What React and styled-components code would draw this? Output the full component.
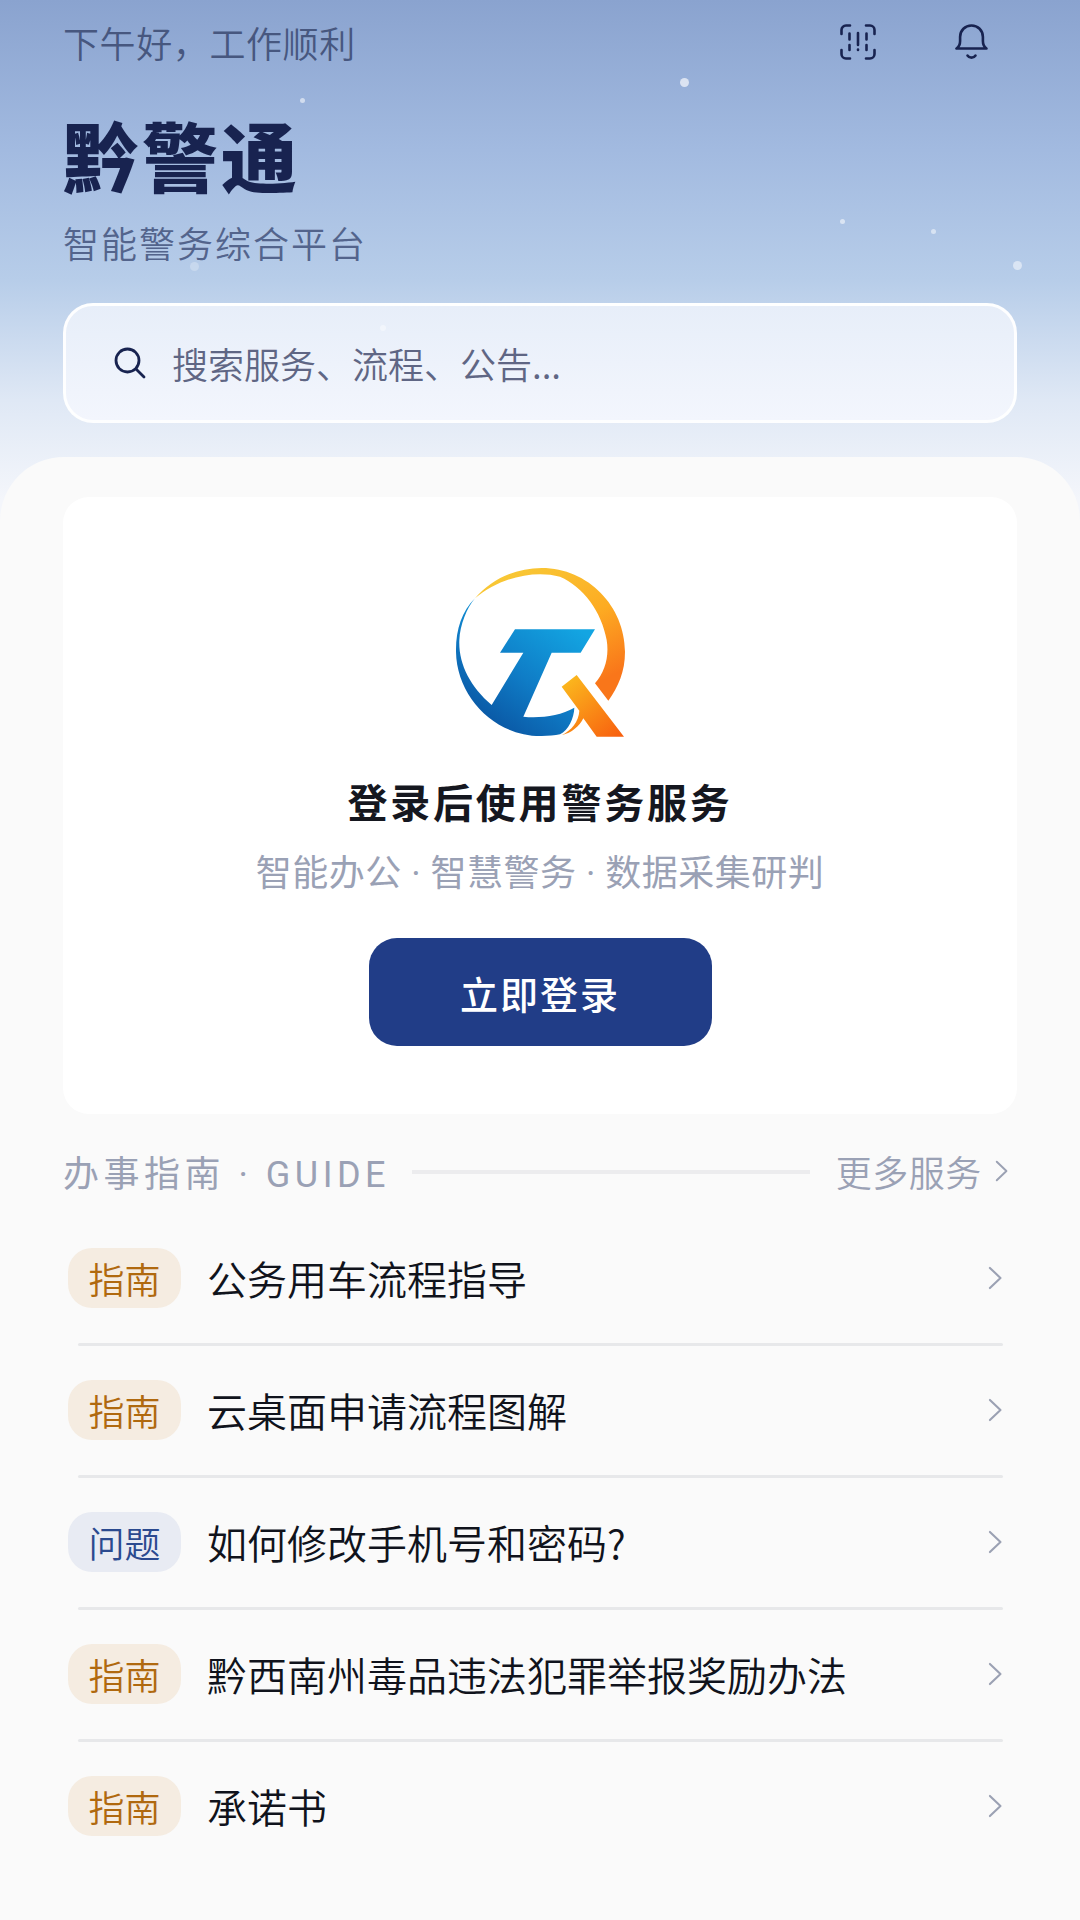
import React from "react";
import styled, { createGlobalStyle } from "styled-components";

const Global = createGlobalStyle`
  html, body { margin: 0; padding: 0; background: #fafafa; }
  * { box-sizing: border-box; }
  body { font-family: "Noto Sans CJK SC", "Noto Sans", sans-serif; }
`;

const Page = styled.div`
  position: relative;
  width: 1080px;
  height: 1920px;
  overflow: hidden;
  display: flex;
  flex-direction: column;
  background: linear-gradient(180deg, #8aa3cf 0px, #a2bae0 150px, #b7cde9 280px, #dfe8f5 400px, #f4f6fb 500px);
`;

const Hero = styled.header`
  position: relative;
  height: 457px;
  flex: none;
  padding: 0 63px;
  display: flex;
  flex-direction: column;
`;

const Dot = styled.span`
  position: absolute;
  border-radius: 50%;
  background: rgba(255, 255, 255, ${(p) => p.$a});
`;

const TopBar = styled.div`
  display: flex;
  align-items: center;
  justify-content: space-between;
  height: 50px;
  margin-top: 17px;
`;

const Greeting = styled.div`
  font-size: 36px;
  line-height: 50px;
  color: #47577f;
  font-weight: 350;
  letter-spacing: 0.6px;
`;

const TopIcons = styled.div`
  display: flex;
  align-items: center;
  gap: 79px;
  margin-right: 29px;
`;

const Title = styled.h1`
  margin: 39px 0 0;
  font-size: 76px;
  line-height: 96px;
  font-weight: 900;
  letter-spacing: 3px;
  color: #182350;
`;

const Subtitle = styled.div`
  margin-top: 15px;
  font-size: 36px;
  line-height: 50px;
  letter-spacing: 2px;
  font-weight: 350;
  color: #53648c;
`;

const Search = styled.div`
  margin-top: 36px;
  height: 120px;
  display: flex;
  align-items: center;
  padding-left: 48px;
  gap: 26px;
  border: 3px solid rgba(255, 255, 255, 0.92);
  border-radius: 30px;
  background: linear-gradient(180deg, #e7eef9, #f3f6fd);
`;

const SearchText = styled.span`
  font-size: 36px;
  font-weight: 350;
  color: #5f6684;
`;

const Sheet = styled.main`
  flex: 1;
  background: #fafafa;
  border-radius: 64px 64px 0 0;
  padding: 40px 63px 0;
`;

const Card = styled.section`
  height: 617px;
  background: #fff;
  border-radius: 26px;
  display: flex;
  flex-direction: column;
  align-items: center;
  padding-top: 43px;
`;

const CardTitle = styled.div`
  margin-top: 13px;
  font-size: 40px;
  line-height: 56px;
  font-weight: 700;
  letter-spacing: 2.8px;
  color: #15171f;
`;

const CardSub = styled.div`
  margin-top: 20px;
  font-family: "Roboto", "Noto Sans CJK SC", sans-serif;
  font-size: 36px;
  font-weight: 400;
  letter-spacing: 0.5px;
  line-height: 50px;
  color: #9aa1b5;
`;

const LoginButton = styled.div`
  margin-top: 39px;
  width: 343px;
  height: 108px;
  border-radius: 28px;
  background: #213d87;
  color: #fff;
  font-size: 38px;
  font-weight: 500;
  letter-spacing: 2px;
  display: flex;
  align-items: center;
  justify-content: center;
`;

const SectionHead = styled.div`
  margin-top: 32px;
  height: 50px;
  display: flex;
  align-items: center;
  padding-right: 9px;
`;

const SectionLabel = styled.div`
  font-family: "Roboto", "Noto Sans CJK SC", sans-serif;
  font-size: 36px;
  font-weight: 400;
  letter-spacing: 4.5px;
  color: #9aa1b5;
  white-space: nowrap;
`;

const SectionRule = styled.div`
  flex: 1;
  height: 4px;
  background: #ececee;
  margin: 2px 26px 0 22px;
`;

const More = styled.div`
  font-size: 36px;
  font-weight: 350;
  letter-spacing: 0.5px;
  color: #9aa1b5;
  display: flex;
  align-items: center;
  gap: 13px;
  white-space: nowrap;
`;

const List = styled.div`
  margin-top: 16px;
`;

const Row = styled.div`
  height: 132px;
  display: flex;
  align-items: center;
  padding: 0 15px 0 5px;
  position: relative;
  &:not(:last-child)::after {
    content: "";
    position: absolute;
    left: 15px;
    right: 14px;
    bottom: -2px;
    height: 3px;
    border-radius: 2px;
    background: #e7e8ea;
  }
`;

const Tag = styled.span`
  width: 113px;
  height: 60px;
  border-radius: 24px;
  flex: none;
  display: flex;
  align-items: center;
  justify-content: center;
  font-size: 36px;
  font-weight: 350;
  background: ${(p) => (p.$kind === "问题" ? "#e8ebf3" : "#f5ece1")};
  color: ${(p) => (p.$kind === "问题" ? "#2b4a8f" : "#b0690f")};
`;

const RowTitle = styled.span`
  margin-left: 26px;
  flex: 1;
  font-size: 40px;
  font-weight: 350;
  color: #10131c;
`;

const Chevron = ({ size = 24 }) => (
  <svg width={size * 0.6} height={size} viewBox="0 0 15 25" fill="none">
    <path d="M2 2 L13 12.5 L2 23" stroke="#9ba1b3" strokeWidth="2.2" strokeLinecap="round" strokeLinejoin="round" />
  </svg>
);

const ScanIcon = () => (
  <svg width="36" height="36" viewBox="0 0 36 36" fill="none" stroke="#182350" strokeWidth="2.6" strokeLinecap="round">
    <path d="M10 1.5H6a4.5 4.5 0 0 0-4.5 4.5v4" />
    <path d="M26 1.5h4a4.5 4.5 0 0 1 4.5 4.5v4" />
    <path d="M10 34.5H6a4.5 4.5 0 0 1-4.5-4.5v-4" />
    <path d="M26 34.5h4a4.5 4.5 0 0 0 4.5-4.5v-4" />
    <path d="M9.5 9.500v6M9.500 21v5M18 9v12M18 25.500v.5M26.500 9.500v6M26.500 21v5" />
  </svg>
);

const BellIcon = () => (
  <svg width="33" height="36" viewBox="0 0 33 36" fill="none" stroke="#182350" strokeWidth="2.6" strokeLinecap="round" strokeLinejoin="round">
    <path d="M1.5 24.500h30c-2.600-1.800-3.600-4-3.600-7.500v-4c0-6.600-5-11.500-11.400-11.500S5.100 6.400 5.100 13v4c0 3.500-1 5.700-3.600 7.500z" />
    <path d="M12.500 31.500c1.800 2.800 6.200 2.800 8 0" />
  </svg>
);

const SearchIcon = () => (
  <svg width="32" height="32" viewBox="0 0 32 32" fill="none" stroke="#182350" strokeWidth="2.800" strokeLinecap="round">
    <circle cx="13.500" cy="13.500" r="11.500" />
    <path d="M22 22 L30 30" />
  </svg>
);

const Logo = () => (
  <svg width="240" height="220" viewBox="0 0 720 660">
    <defs>
      <linearGradient id="gBlue" gradientUnits="userSpaceOnUse" x1="480" y1="270" x2="250" y2="590">
        <stop offset="0" stopColor="#13a5e2" />
        <stop offset="0.55" stopColor="#0f7cc6" />
        <stop offset="1" stopColor="#0a56a3" />
      </linearGradient>
      <linearGradient id="gRing" x1="0" y1="0" x2="0.6" y2="1">
        <stop offset="0" stopColor="#f7cf3a" />
        <stop offset="0.6" stopColor="#fdab22" />
        <stop offset="1" stopColor="#f9761a" />
      </linearGradient>
      <linearGradient id="gX" x1="0.1" y1="0" x2="0.9" y2="1">
        <stop offset="0" stopColor="#fbbb1e" />
        <stop offset="1" stopColor="#f8610f" />
      </linearGradient>
    </defs>
    <path d="M165 175 C 125 215 107 270 108 335 C 110 470 225 590 365 588 C 385 588 405 586 420 583 C 445 570 462 535 463 503 C 420 528 360 535 310 530 L 395 338 H482 L525 268 H285 L240 338 H310 L215 495 C 150 440 115 370 118 300 C 120 255 140 205 165 175 Z" fill="url(#gBlue)" />
    <path d="M165 175 C 215 115 290 84 365 84 C 505 84 615 200 615 335 C 615 395 595 440 565 482 L525 430 C 555 395 568 350 560 300 C 545 215 490 140 420 110 C 340 88 235 115 165 175 Z" fill="url(#gRing)" />
    <path d="M425 440 L470 405 L612 590 H530 L490 535 C 478 560 455 578 425 586 C 455 570 476 545 478 512 Z" fill="url(#gX)" />
  </svg>
);

const dots = [
  [300, 98, 5, 0.55], [680, 78, 9, 0.65], [840, 219, 5, 0.55], [931, 229, 5, 0.5],
  [1013, 261, 9, 0.5], [190, 262, 9, 0.25], [380, 325, 6, 0.4],
];

const rows = [
  ["指南", "公务用车流程指导"],
  ["指南", "云桌面申请流程图解"],
  ["问题", "如何修改手机号和密码?"],
  ["指南", "黔西南州毒品违法犯罪举报奖励办法"],
  ["指南", "承诺书"],
];

export default function App() {
  return (
    <Page>
      <Global />
      <Hero>
        {dots.map(([x, y, s, a]) => (
          <Dot key={x} $a={a} style={{ left: x, top: y, width: s, height: s }} />
        ))}
        <TopBar>
          <Greeting>下午好，工作顺利</Greeting>
          <TopIcons>
            <ScanIcon />
            <BellIcon />
          </TopIcons>
        </TopBar>
        <Title>黔警通</Title>
        <Subtitle>智能警务综合平台</Subtitle>
        <Search>
          <SearchIcon />
          <SearchText>搜索服务、流程、公告...</SearchText>
        </Search>
      </Hero>
      <Sheet>
        <Card>
          <Logo />
          <CardTitle>登录后使用警务服务</CardTitle>
          <CardSub>智能办公 · 智慧警务 · 数据采集研判</CardSub>
          <LoginButton>立即登录</LoginButton>
        </Card>
        <SectionHead>
          <SectionLabel>办事指南 · GUIDE</SectionLabel>
          <SectionRule />
          <More>
            更多服务
            <Chevron size={22} />
          </More>
        </SectionHead>
        <List>
          {rows.map(([kind, title]) => (
            <Row key={title}>
              <Tag $kind={kind}>{kind}</Tag>
              <RowTitle>{title}</RowTitle>
              <Chevron />
            </Row>
          ))}
        </List>
      </Sheet>
    </Page>
  );
}
